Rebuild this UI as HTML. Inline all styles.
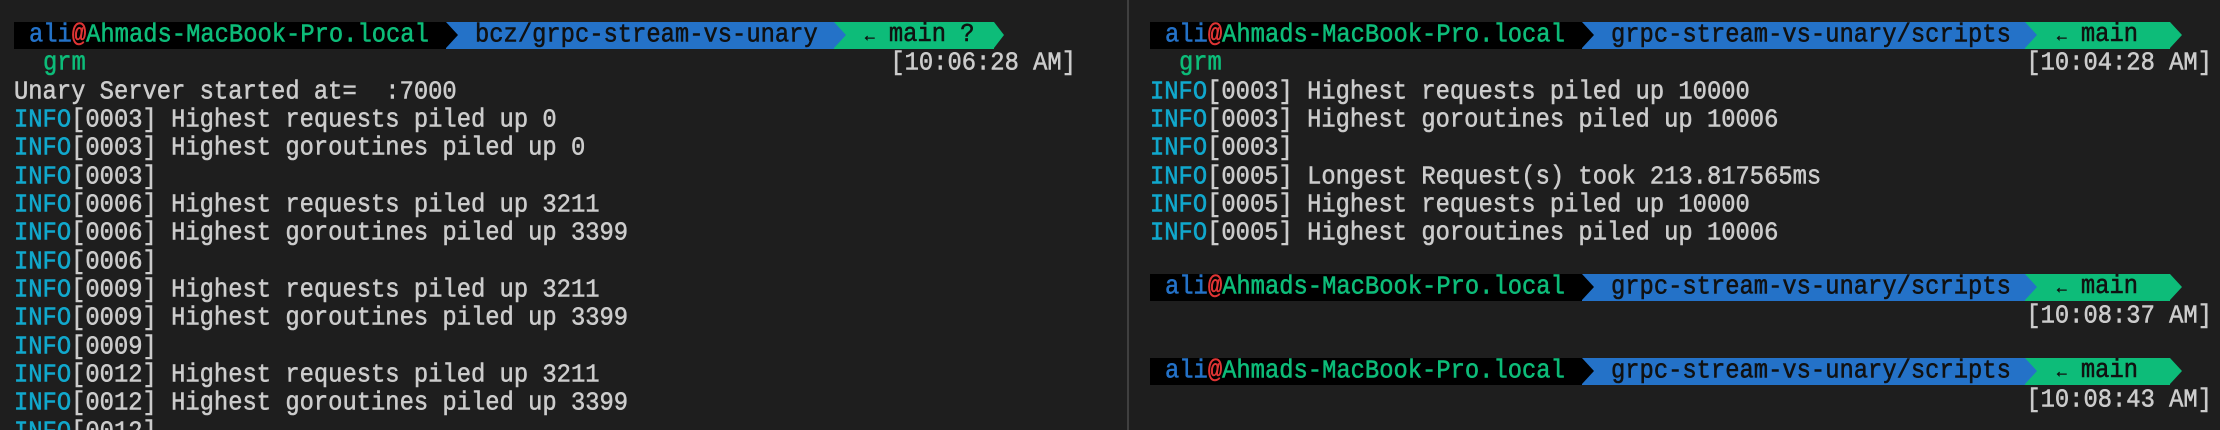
<!DOCTYPE html>
<html><head><meta charset="utf-8"><style>
html,body{margin:0;padding:0;background:#1e1e1e;width:2220px;height:430px;overflow:hidden;position:relative}
.l{position:absolute;height:28px;line-height:28px;font-family:"Liberation Mono",monospace;font-size:23.8px;color:#cccccc;white-space:pre}
.t{display:inline-block;transform:scaleY(1.08);transform-origin:50% 55%;-webkit-text-stroke:0.5px currentColor}
.i{color:#11a8cd}
.seg{position:absolute;height:27px;top:0}
.bk{background:#000}
.bl{background:#2472c8}
.gr{background:#0dbc79}
.tri{position:absolute;top:0;width:0;height:0;border-top:13.5px solid transparent;border-bottom:13.5px solid transparent}
.u{color:#2472c8}.a{color:#e03535}.h{color:#0dbc79}
.d{color:#111}
</style></head><body>
<div style="position:absolute;left:1127px;top:0;width:2px;height:430px;background:#3f3f3f"></div>

<!-- LEFT prompt -->
<div class="l" style="left:0;top:22px;width:1110px">
 <div class="seg bk" style="left:14px;width:432px"></div>
 <div class="seg bl" style="left:446px;width:388px"></div>
 <div class="tri" style="left:446px;border-left:12px solid #000"></div>
 <div class="seg gr" style="left:834px;width:160px"></div>
 <div class="tri" style="left:834px;border-left:12px solid #2472c8"></div>
 <div class="tri" style="left:994px;border-left:10px solid #0dbc79"></div>
 <span class="t" style="position:absolute;left:29px;top:0"><span class="u">ali</span><span class="a">@</span><span class="h">Ahmads-MacBook-Pro.local</span></span>
 <span class="d t" style="position:absolute;left:475px;top:0">bcz/grpc-stream-vs-unary</span>
 <span class="d t" style="position:absolute;left:865px;top:0"><span style="font-size:16px">←</span> main ?</span>
</div>
<div class="l h" style="left:43px;top:50px"><span class="t">grm</span></div>
<div class="l" style="left:0;width:1076px;text-align:right;top:50px"><span class="t">[10:06:28 AM]</span></div>
<div class="l" style="left:14px;top:79px"><span class="t">Unary Server started at=  :7000</span></div>
<div class="l" style="left:14px;top:107px"><span class="t"><span class="i">INFO</span>[0003] Highest requests piled up 0</span></div>
<div class="l" style="left:14px;top:135px"><span class="t"><span class="i">INFO</span>[0003] Highest goroutines piled up 0</span></div>
<div class="l" style="left:14px;top:164px"><span class="t"><span class="i">INFO</span>[0003]</span></div>
<div class="l" style="left:14px;top:192px"><span class="t"><span class="i">INFO</span>[0006] Highest requests piled up 3211</span></div>
<div class="l" style="left:14px;top:220px"><span class="t"><span class="i">INFO</span>[0006] Highest goroutines piled up 3399</span></div>
<div class="l" style="left:14px;top:249px"><span class="t"><span class="i">INFO</span>[0006]</span></div>
<div class="l" style="left:14px;top:277px"><span class="t"><span class="i">INFO</span>[0009] Highest requests piled up 3211</span></div>
<div class="l" style="left:14px;top:305px"><span class="t"><span class="i">INFO</span>[0009] Highest goroutines piled up 3399</span></div>
<div class="l" style="left:14px;top:334px"><span class="t"><span class="i">INFO</span>[0009]</span></div>
<div class="l" style="left:14px;top:362px"><span class="t"><span class="i">INFO</span>[0012] Highest requests piled up 3211</span></div>
<div class="l" style="left:14px;top:390px"><span class="t"><span class="i">INFO</span>[0012] Highest goroutines piled up 3399</span></div>
<div class="l" style="left:14px;top:419px"><span class="t"><span class="i">INFO</span>[0012]</span></div>

<!-- RIGHT -->
<div class="l" style="left:0;top:22px;width:2220px">
 <div class="seg bk" style="left:1150px;width:432px"></div>
 <div class="seg bl" style="left:1582px;width:443px"></div>
 <div class="tri" style="left:1582px;border-left:12px solid #000"></div>
 <div class="seg gr" style="left:2025px;width:145px"></div>
 <div class="tri" style="left:2025px;border-left:12px solid #2472c8"></div>
 <div class="tri" style="left:2170px;border-left:12px solid #0dbc79"></div>
 <span class="t" style="position:absolute;left:1165px;top:0"><span class="u">ali</span><span class="a">@</span><span class="h">Ahmads-MacBook-Pro.local</span></span>
 <span class="d t" style="position:absolute;left:1611px;top:0">grpc-stream-vs-unary/scripts</span>
 <span class="d t" style="position:absolute;left:2057px;top:0"><span style="font-size:16px">←</span> main</span>
</div>
<div class="l h" style="left:1179px;top:50px"><span class="t">grm</span></div>
<div class="l" style="left:0;width:2212px;text-align:right;top:50px"><span class="t">[10:04:28 AM]</span></div>
<div class="l" style="left:1150px;top:79px"><span class="t"><span class="i">INFO</span>[0003] Highest requests piled up 10000</span></div>
<div class="l" style="left:1150px;top:107px"><span class="t"><span class="i">INFO</span>[0003] Highest goroutines piled up 10006</span></div>
<div class="l" style="left:1150px;top:135px"><span class="t"><span class="i">INFO</span>[0003]</span></div>
<div class="l" style="left:1150px;top:164px"><span class="t"><span class="i">INFO</span>[0005] Longest Request(s) took 213.817565ms</span></div>
<div class="l" style="left:1150px;top:192px"><span class="t"><span class="i">INFO</span>[0005] Highest requests piled up 10000</span></div>
<div class="l" style="left:1150px;top:220px"><span class="t"><span class="i">INFO</span>[0005] Highest goroutines piled up 10006</span></div>

<div class="l" style="left:0;top:274px;width:2220px">
 <div class="seg bk" style="left:1150px;width:432px"></div>
 <div class="seg bl" style="left:1582px;width:443px"></div>
 <div class="tri" style="left:1582px;border-left:12px solid #000"></div>
 <div class="seg gr" style="left:2025px;width:145px"></div>
 <div class="tri" style="left:2025px;border-left:12px solid #2472c8"></div>
 <div class="tri" style="left:2170px;border-left:12px solid #0dbc79"></div>
 <span class="t" style="position:absolute;left:1165px;top:0"><span class="u">ali</span><span class="a">@</span><span class="h">Ahmads-MacBook-Pro.local</span></span>
 <span class="d t" style="position:absolute;left:1611px;top:0">grpc-stream-vs-unary/scripts</span>
 <span class="d t" style="position:absolute;left:2057px;top:0"><span style="font-size:16px">←</span> main</span>
</div>
<div class="l" style="left:0;width:2212px;text-align:right;top:303px"><span class="t">[10:08:37 AM]</span></div>

<div class="l" style="left:0;top:358px;width:2220px">
 <div class="seg bk" style="left:1150px;width:432px"></div>
 <div class="seg bl" style="left:1582px;width:443px"></div>
 <div class="tri" style="left:1582px;border-left:12px solid #000"></div>
 <div class="seg gr" style="left:2025px;width:145px"></div>
 <div class="tri" style="left:2025px;border-left:12px solid #2472c8"></div>
 <div class="tri" style="left:2170px;border-left:12px solid #0dbc79"></div>
 <span class="t" style="position:absolute;left:1165px;top:0"><span class="u">ali</span><span class="a">@</span><span class="h">Ahmads-MacBook-Pro.local</span></span>
 <span class="d t" style="position:absolute;left:1611px;top:0">grpc-stream-vs-unary/scripts</span>
 <span class="d t" style="position:absolute;left:2057px;top:0"><span style="font-size:16px">←</span> main</span>
</div>
<div class="l" style="left:0;width:2212px;text-align:right;top:387px"><span class="t">[10:08:43 AM]</span></div>
</body></html>
